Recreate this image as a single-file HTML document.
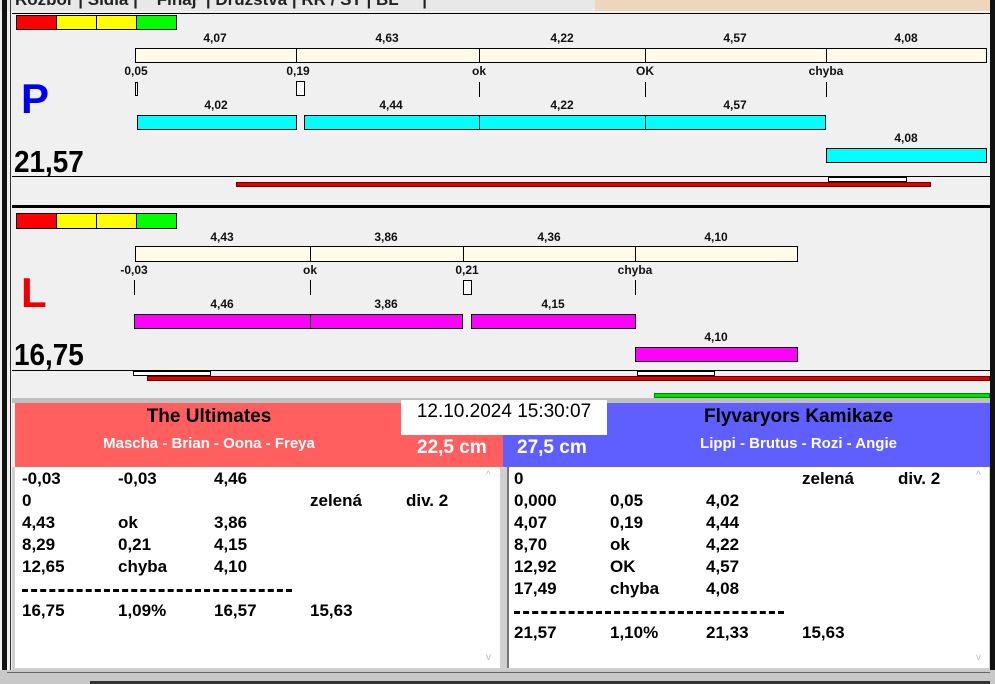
<!DOCTYPE html>
<html><head><meta charset="utf-8"><style>
*{margin:0;padding:0}
body{width:995px;height:684px;position:relative;overflow:hidden;background:#f0f0f0;font-family:"Liberation Sans",Arial,sans-serif}
div{position:absolute;box-sizing:border-box}
.b{border:1px solid #000}
.t{font-weight:bold;font-size:12px;color:#111;transform:translateX(-50%);white-space:nowrap;line-height:14px}
.cr{background:#fffbe6}
.cy{background:#00ffff}
.mg{background:#ff00ff}
.tk{width:1px;height:15px;background:#000}
.row{font-weight:bold;font-size:17px;line-height:22px;white-space:nowrap;color:#000}
.row span{position:absolute}
</style></head><body>
<!-- top tabs -->
<div style="left:0;top:0;width:995px;height:11px;background:#e8e8e8"></div>
<div style="left:595px;top:0;width:395px;height:11px;background:#eed6bc"></div>
<div style="left:13px;top:0;width:580px;height:11px;overflow:hidden">
<div style="left:2px;top:-10px;font-size:17px;font-weight:bold;color:#222;width:580px;white-space:nowrap">Rozbor&nbsp;|&nbsp;Sídla&nbsp;|&nbsp;&nbsp;&nbsp;&nbsp;Fináj&nbsp;&nbsp;|&nbsp;Družstva&nbsp;|&nbsp;RR / ST&nbsp;|&nbsp;BL&nbsp;&nbsp;&nbsp;&nbsp;&nbsp;|</div></div>
<div style="left:2px;top:0;width:5px;height:684px;background:#111"></div>
<div style="left:10px;top:0;width:1px;height:670px;background:#333"></div>
<div style="left:990px;top:0;width:5px;height:670px;background:#111"></div>

<!-- P panel -->
<div style="left:12px;top:13px;width:978px;height:1px;background:#000"></div>
<div style="left:16px;top:15px;width:41px;height:15px;background:#f00" class="b"></div>
<div style="left:56px;top:15px;width:41px;height:15px;background:#ff0" class="b"></div>
<div style="left:96px;top:15px;width:41px;height:15px;background:#ff0" class="b"></div>
<div style="left:136px;top:15px;width:41px;height:15px;background:#0f0" class="b"></div>

<div class="t" style="left:215px;top:31px">4,07</div>
<div class="t" style="left:387px;top:31px">4,63</div>
<div class="t" style="left:562px;top:31px">4,22</div>
<div class="t" style="left:735px;top:31px">4,57</div>
<div class="t" style="left:906px;top:31px">4,08</div>
<div class="b cr" style="left:135px;top:48px;width:162px;height:15px"></div>
<div class="b cr" style="left:296px;top:48px;width:184px;height:15px"></div>
<div class="b cr" style="left:479px;top:48px;width:167px;height:15px"></div>
<div class="b cr" style="left:645px;top:48px;width:182px;height:15px"></div>
<div class="b cr" style="left:826px;top:48px;width:161px;height:15px"></div>
<div class="t" style="left:136px;top:64px">0,05</div>
<div class="t" style="left:298px;top:64px">0,19</div>
<div class="t" style="left:479px;top:64px">ok</div>
<div class="t" style="left:645px;top:64px">OK</div>
<div class="t" style="left:826px;top:64px">chyba</div>
<div class="b" style="left:135px;top:82px;width:3px;height:14px;background:#fff"></div>
<div class="b" style="left:296px;top:81px;width:9px;height:15px;background:#fff"></div>
<div class="tk" style="left:479px;top:82px"></div>
<div class="tk" style="left:645px;top:82px"></div>
<div class="tk" style="left:826px;top:82px"></div>
<div style="left:21px;top:74px;font-size:42px;font-weight:bold;color:#0000ee;line-height:50px">P</div>
<div class="t" style="left:216px;top:98px">4,02</div>
<div class="t" style="left:391px;top:98px">4,44</div>
<div class="t" style="left:562px;top:98px">4,22</div>
<div class="t" style="left:735px;top:98px">4,57</div>
<div class="b cy" style="left:137px;top:115px;width:160px;height:15px"></div>
<div class="b cy" style="left:304px;top:115px;width:176px;height:15px"></div>
<div class="b cy" style="left:479px;top:115px;width:167px;height:15px"></div>
<div class="b cy" style="left:645px;top:115px;width:181px;height:15px"></div>
<div class="t" style="left:906px;top:131px">4,08</div>
<div class="b cy" style="left:826px;top:148px;width:161px;height:15px"></div>
<div style="left:14px;top:144px;font-size:31px;font-weight:bold;line-height:36px;transform:scaleX(0.9);transform-origin:left">21,57</div>
<div style="left:12px;top:176px;width:978px;height:1px;background:#000"></div>
<div class="b" style="left:828px;top:177px;width:79px;height:5px;background:#fff"></div>
<div class="b" style="left:236px;top:182px;width:695px;height:5px;background:#e00000;border-color:#600"></div>
<div style="left:12px;top:205px;width:978px;height:3px;background:#000"></div>

<!-- L panel -->
<div style="left:16px;top:213px;width:41px;height:16px;background:#f00" class="b"></div>
<div style="left:56px;top:213px;width:41px;height:16px;background:#ff0" class="b"></div>
<div style="left:96px;top:213px;width:41px;height:16px;background:#ff0" class="b"></div>
<div style="left:136px;top:213px;width:41px;height:16px;background:#0f0" class="b"></div>
<div class="t" style="left:222px;top:230px">4,43</div>
<div class="t" style="left:386px;top:230px">3,86</div>
<div class="t" style="left:549px;top:230px">4,36</div>
<div class="t" style="left:716px;top:230px">4,10</div>
<div class="b cr" style="left:135px;top:246px;width:176px;height:16px"></div>
<div class="b cr" style="left:310px;top:246px;width:154px;height:16px"></div>
<div class="b cr" style="left:463px;top:246px;width:173px;height:16px"></div>
<div class="b cr" style="left:635px;top:246px;width:163px;height:16px"></div>
<div class="t" style="left:134px;top:263px">-0,03</div>
<div class="t" style="left:310px;top:263px">ok</div>
<div class="t" style="left:467px;top:263px">0,21</div>
<div class="t" style="left:635px;top:263px">chyba</div>
<div class="tk" style="left:134px;top:280px"></div>
<div class="tk" style="left:310px;top:280px"></div>
<div class="b" style="left:463px;top:280px;width:9px;height:15px;background:#fff"></div>
<div class="tk" style="left:635px;top:280px"></div>
<div style="left:21px;top:268px;font-size:42px;font-weight:bold;color:#ee0000;line-height:50px">L</div>
<div class="t" style="left:222px;top:297px">4,46</div>
<div class="t" style="left:386px;top:297px">3,86</div>
<div class="t" style="left:553px;top:297px">4,15</div>
<div class="b mg" style="left:134px;top:314px;width:177px;height:15px"></div>
<div class="b mg" style="left:310px;top:314px;width:153px;height:15px"></div>
<div class="b mg" style="left:471px;top:314px;width:165px;height:15px"></div>
<div class="t" style="left:716px;top:330px">4,10</div>
<div class="b mg" style="left:635px;top:347px;width:163px;height:15px"></div>
<div style="left:14px;top:337px;font-size:31px;font-weight:bold;line-height:36px;transform:scaleX(0.9);transform-origin:left">16,75</div>
<div style="left:12px;top:370px;width:978px;height:1px;background:#000"></div>
<div class="b" style="left:133px;top:371px;width:78px;height:5px;background:#fff"></div>
<div class="b" style="left:637px;top:371px;width:78px;height:5px;background:#fff"></div>
<div class="b" style="left:147px;top:376px;width:843px;height:5px;background:#e00000;border-color:#600"></div>
<div class="b" style="left:654px;top:393px;width:336px;height:5px;background:#00e000;border-color:#080"></div>
<div style="left:12px;top:398px;width:978px;height:5px;background:#c0c0c0"></div>

<!-- headers -->
<div style="left:15px;top:403px;width:488px;height:64px;background:#ff5f5f"></div>
<div style="left:503px;top:403px;width:487px;height:64px;background:#5f5fff"></div>
<div style="left:401px;top:400px;width:206px;height:35px;background:#fff"></div>
<div style="left:401px;top:400px;width:206px;text-align:center;font-size:19px;line-height:24px">12.10.2024 15:30:07</div>
<div style="left:15px;top:405px;width:388px;text-align:center;font-size:19px;font-weight:bold;line-height:24px">The Ultimates</div>
<div style="left:15px;top:434px;width:388px;text-align:center;font-size:15px;font-weight:bold;color:#fff;line-height:20px">Mascha - Brian - Oona - Freya</div>
<div style="left:417px;top:436px;font-size:19px;font-weight:bold;color:#fff;line-height:24px">22,5 cm</div>
<div style="left:517px;top:436px;font-size:19px;font-weight:bold;color:#fff;line-height:24px">27,5 cm</div>
<div style="left:607px;top:405px;width:383px;text-align:center;font-size:19px;font-weight:bold;line-height:24px">Flyvaryors Kamikaze</div>
<div style="left:607px;top:434px;width:383px;text-align:center;font-size:15px;font-weight:bold;color:#fff;line-height:20px">Lippi - Brutus - Rozi - Angie</div>

<!-- lists -->
<div style="left:12px;top:467px;width:978px;height:203px;background:#d0d0d0"></div>
<div style="left:15px;top:467px;width:485px;height:201px;background:#fff"></div>
<div style="left:507px;top:467px;width:482px;height:201px;background:#fff;border-left:2px solid #777"></div>
<div style="left:486px;top:470px;font-size:10px;color:#bbb">^</div>
<div style="left:486px;top:652px;font-size:10px;color:#bbb">v</div>
<div style="left:976px;top:470px;font-size:10px;color:#bbb">^</div>
<div style="left:976px;top:652px;font-size:10px;color:#bbb">v</div>

<div class="row" style="left:22px;top:468px;width:470px;height:200px">
<div style="top:0"><span style="left:0">-0,03</span><span style="left:96px">-0,03</span><span style="left:192px">4,46</span></div>
<div style="top:22px"><span style="left:0">0</span><span style="left:288px">zelená</span><span style="left:384px">div. 2</span></div>
<div style="top:44px"><span style="left:0">4,43</span><span style="left:96px">ok</span><span style="left:192px">3,86</span></div>
<div style="top:66px"><span style="left:0">8,29</span><span style="left:96px">0,21</span><span style="left:192px">4,15</span></div>
<div style="top:88px"><span style="left:0">12,65</span><span style="left:96px">chyba</span><span style="left:192px">4,10</span></div>
<div style="left:0;width:270px;height:3px;top:121px;border-top:3px dashed #000"></div>
<div style="top:132px"><span style="left:0">16,75</span><span style="left:96px">1,09%</span><span style="left:192px">16,57</span><span style="left:288px">15,63</span></div>
</div>
<div class="row" style="left:514px;top:468px;width:470px;height:200px">
<div style="top:0"><span style="left:0">0</span><span style="left:288px">zelená</span><span style="left:384px">div. 2</span></div>
<div style="top:22px"><span style="left:0">0,000</span><span style="left:96px">0,05</span><span style="left:192px">4,02</span></div>
<div style="top:44px"><span style="left:0">4,07</span><span style="left:96px">0,19</span><span style="left:192px">4,44</span></div>
<div style="top:66px"><span style="left:0">8,70</span><span style="left:96px">ok</span><span style="left:192px">4,22</span></div>
<div style="top:88px"><span style="left:0">12,92</span><span style="left:96px">OK</span><span style="left:192px">4,57</span></div>
<div style="top:110px"><span style="left:0">17,49</span><span style="left:96px">chyba</span><span style="left:192px">4,08</span></div>
<div style="left:0;width:270px;height:3px;top:143px;border-top:3px dashed #000"></div>
<div style="top:154px"><span style="left:0">21,57</span><span style="left:96px">1,10%</span><span style="left:192px">21,33</span><span style="left:288px">15,63</span></div>
</div>

<!-- bottom -->
<div style="left:0;top:670px;width:995px;height:14px;background:#c8c8c8"></div>
<div style="left:7px;top:672px;width:983px;height:1px;background:#666"></div>
<div style="left:90px;top:681px;width:900px;height:3px;background:#333"></div>
</body></html>
